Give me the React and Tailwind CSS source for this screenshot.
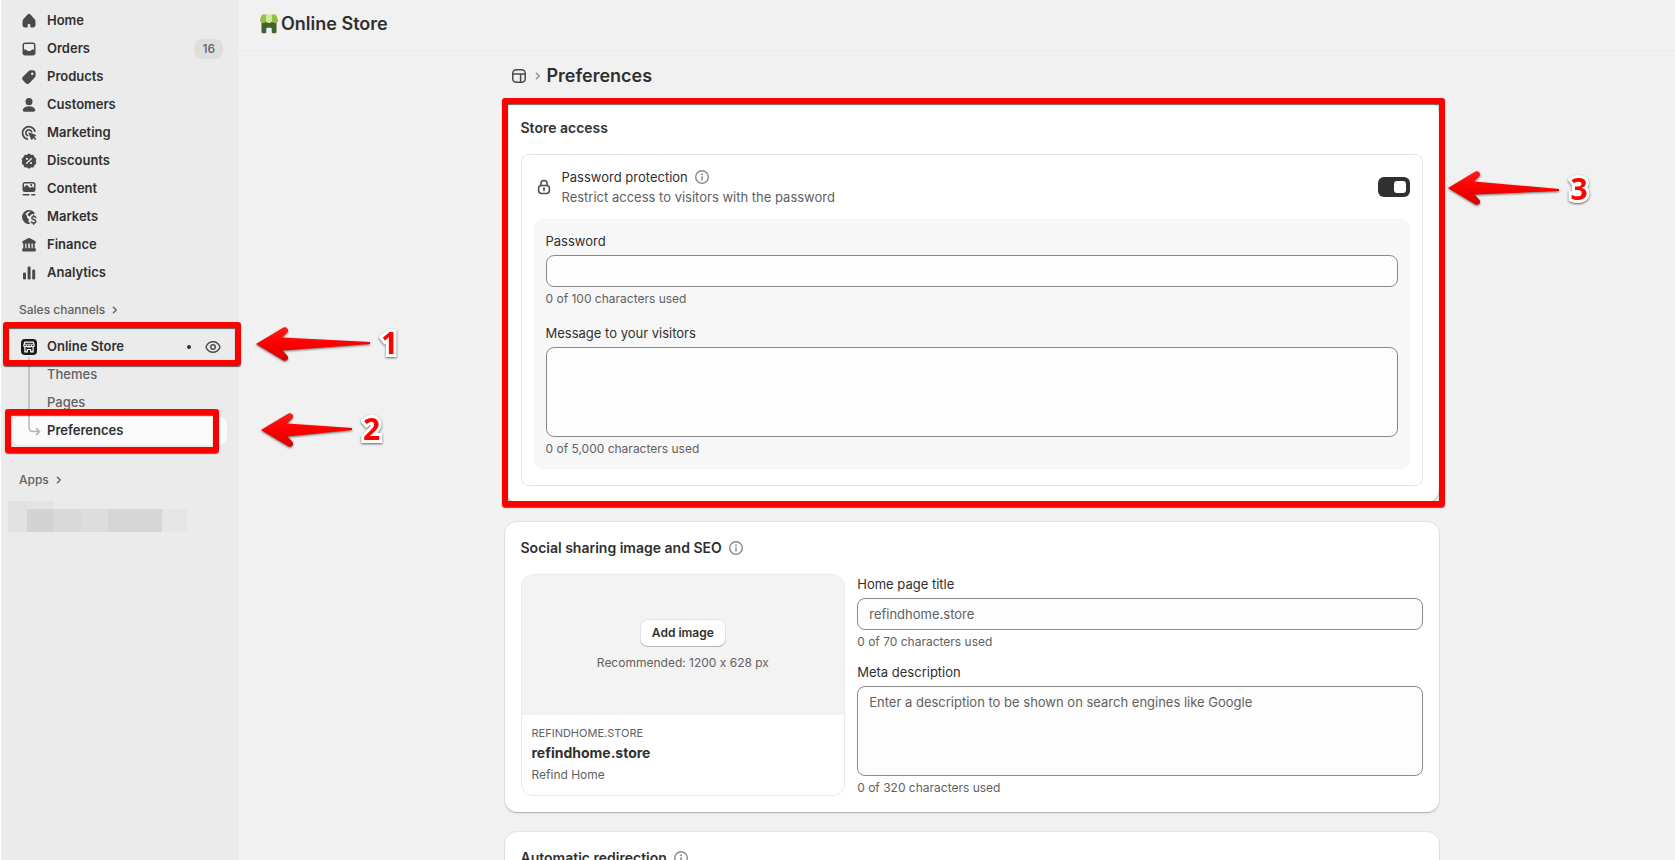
import React from "react";

function Icon({ size = 20, className = "", children }) {
  return (
    <svg
      width={size}
      height={size}
      viewBox="0 0 20 20"
      fill="currentColor"
      fillRule="evenodd"
      aria-hidden="true"
      className={`shrink-0 ${className}`}
    >
      {children}
    </svg>
  );
}

const HomeIcon = () => (
  <Icon>
    <path d="M8.344 3.692a2.25 2.25 0 0 1 3.312 0l3.854 4.19a3.75 3.75 0 0 1 .99 2.538v3.33a2.75 2.75 0 0 1-2.75 2.75h-1.75a.75.75 0 0 1-.75-.75v-2a.75.75 0 0 0-.75-.75h-1a.75.75 0 0 0-.75.75v2a.75.75 0 0 1-.75.75h-1.75a2.75 2.75 0 0 1-2.75-2.75v-3.33c0-.94.353-1.846.99-2.539l3.854-4.189Z" />
  </Icon>
);

const OrdersIcon = () => (
  <Icon>
    <path d="M6.25 3.5a2.75 2.75 0 0 0-2.75 2.75v7.5a2.75 2.75 0 0 0 2.75 2.75h7.5a2.75 2.75 0 0 0 2.75-2.75v-7.5a2.75 2.75 0 0 0-2.75-2.75h-7.5ZM5 6.25c0-.69.56-1.25 1.25-1.25h7.5c.69 0 1.25.56 1.25 1.25v4.25h-1.64c-.5 0-.96.27-1.2.7l-.24.42a.75.75 0 0 1-.65.38h-2.54a.75.75 0 0 1-.65-.38l-.24-.42a1.38 1.38 0 0 0-1.2-.7H5V6.25Z" />
  </Icon>
);

const ProductsIcon = () => (
  <Icon>
    <path d="M9.700 4.100a3 3 0 0 1 2.100-.8h1.950a2.850 2.850 0 0 1 2.850 2.850V8.300c0 .8-.3 1.550-.85 2.100l-5.100 5.500a2.900 2.900 0 0 1-4.100.030l-2.400-2.400a2.900 2.900 0 0 1 .020-4.100L9.700 4.100ZM13.250 8a1.250 1.250 0 1 0 0-2.500 1.250 1.250 0 0 0 0 2.500Z" />
  </Icon>
);

const CustomersIcon = () => (
  <Icon>
    <path d="M6.5 6.4a3.5 3.5 0 0 1 7 0v.35a3.5 3.5 0 0 1-7 0V6.4Z" />
    <path d="M3.9 14.3c.9-1.8 3.3-3 6.1-3s5.200 1.200 6.100 3c.6 1.200-.3 2.400-1.600 2.400H5.500c-1.300 0-2.200-1.200-1.600-2.400Z" />
  </Icon>
);

const MarketingIcon = () => (
  <Icon>
    <g fill="none" stroke="currentColor" strokeWidth="1.7" strokeLinecap="round">
      <path d="M15.900 8.100A6.300 6.300 0 1 0 8.300 16.100" />
      <path d="M12.700 8.800A3 3 0 1 0 8.600 12.600" />
    </g>
    <path d="M9.700 10.700c-.25-.68.4-1.300 1.050-1.050l5.700 2.100c.75.280.73 1.350-.03 1.600l-1.200.4 1.700 1.700a.8.800 0 0 1-1.150 1.150l-1.700-1.700-.45 1.250c-.26.740-1.320.740-1.590 0L9.700 10.700Z" />
  </Icon>
);

const DiscountsIcon = () => (
  <Icon>
    <path d="M8.700 3.200a1.900 1.900 0 0 1 2.600 0l.75.700 1-.15a1.900 1.900 0 0 1 2.150 1.500l.2 1 .9.500a1.900 1.900 0 0 1 .8 2.450l-.4.900.4.950a1.900 1.900 0 0 1-.8 2.450l-.9.500-.2 1a1.900 1.900 0 0 1-2.150 1.500l-1-.15-.75.700a1.900 1.900 0 0 1-2.600 0l-.75-.7-1 .15A1.900 1.900 0 0 1 4.800 15l-.2-1-.9-.500a1.900 1.900 0 0 1-.8-2.450l.4-.950-.4-.900a1.900 1.900 0 0 1 .8-2.450l.9-.500.2-1a1.900 1.900 0 0 1 2.150-1.500l1 .15.750-.700Z" />
    <g stroke="#ebebeb" strokeWidth="1.400" strokeLinecap="round">
      <path d="M7.700 12.300 12.300 7.700" />
    </g>
    <circle cx="7.900" cy="7.900" r="1.050" fill="#ebebeb" />
    <circle cx="12.100" cy="12.100" r="1.050" fill="#ebebeb" />
  </Icon>
);

const ContentIcon = () => (
  <Icon>
    <path d="M6 3a2.500 2.500 0 0 0-2.500 2.500v5A2.500 2.500 0 0 0 6 13h8a2.500 2.500 0 0 0 2.500-2.500v-5A2.500 2.500 0 0 0 14 3H6Zm-1 2.500a1 1 0 0 1 1-1h8a1 1 0 0 1 1 1v3.600l-1.300-1a1.200 1.200 0 0 0-1.500.050l-1 .850-2.600-2.600a1.200 1.200 0 0 0-1.700 0L5 8.300V5.500Zm7.200 1.700a1.100 1.100 0 1 0 0-2.200 1.100 1.100 0 0 0 0 2.200Z" />
    <rect x="3.500" y="15" width="7.200" height="1.600" rx=".8" />
    <rect x="12" y="15" width="4.500" height="1.600" rx=".8" />
  </Icon>
);

const MarketsIcon = () => (
  <Icon>
    <path d="M10 3a7 7 0 1 0 1 13.930l-.300-1.400c-1.300-.100-1.700-1.300-1-2.300l.400-.600-1.400-1.300c-.8-.750-1-1.900-.500-2.700l-1.900-1.100A5.500 5.500 0 0 1 10 4.500c.55 0 1.080.080 1.580.230L9.300 6.600c-.7.600-.6 1.600.1 2.100l1.300.800c.8-1.700 2.300-2.700 4-2.700l1.300-.15A7 7 0 0 0 10 3Z" />
    <path
      d="M16.700 10.400c-.5-.7-1.300-1-2.100-.9-2.400.3-2.300 2.700 0 3 2.700.3 2.900 3.200.3 3.500-1 .1-2-.2-2.500-1M14.600 8.300v1M14.600 16.200v1.100"
      fill="none"
      stroke="currentColor"
      strokeWidth="1.500"
      strokeLinecap="round"
    />
  </Icon>
);

const FinanceIcon = () => (
  <Icon>
    <path d="M9.100 3.200a2 2 0 0 1 1.800 0l4.900 2.500c.7.350 1 .9 1 1.500 0 .8-.6 1.300-1.300 1.300h-11c-.7 0-1.300-.5-1.300-1.300 0-.6.300-1.150 1-1.500l4.900-2.500Z" />
    <path d="M4.300 8h1.900v6H4.300zM7.500 8h1.700v6H7.500zM10.800 8h1.700v6h-1.700zM13.800 8h1.900v6h-1.900z" />
    <rect x="3.200" y="13.300" width="13.600" height="3.200" rx="1" />
  </Icon>
);

const AnalyticsIcon = () => (
  <Icon>
    <rect x="4" y="9.500" width="3" height="7" rx="1.200" />
    <rect x="8.600" y="3.500" width="3" height="13" rx="1.200" />
    <rect x="13.200" y="6.500" width="3" height="10" rx="1.200" />
  </Icon>
);

const StoreBadgeIcon = () => (
  <Icon>
    <rect x="2" y="2" width="16" height="16" rx="4" fill="#1a1a1a" />
    <g fill="none" stroke="#ffffff" strokeWidth="1.200" strokeLinejoin="round">
      <path d="M5.700 5.200h8.600l.9 3.300c0 1.700-2.300 1.800-2.600.2-.3 1.500-2.400 1.500-2.600 0-.2 1.500-2.300 1.500-2.600 0-.3 1.600-2.600 1.500-2.600-.2l.9-3.300Z" />
      <path d="M5.900 10.300v4.600h2.400v-2.400h3.400v2.400h2.400v-4.600" />
      <path d="M5.300 7.300h9.400" strokeWidth=".8" />
    </g>
  </Icon>
);

const EyeIcon = () => (
  <Icon className="text-[#4a4a4a]">
    <g fill="none" stroke="currentColor" strokeWidth="1.400">
      <path d="M3.300 9.100C4.600 6.500 7.100 4.800 10 4.800s5.400 1.700 6.700 4.300c.3.600.3 1.200 0 1.800-1.300 2.600-3.800 4.300-6.700 4.300s-5.400-1.700-6.700-4.300c-.3-.6-.3-1.200 0-1.800Z" />
      <circle cx="10" cy="10" r="2.300" />
    </g>
  </Icon>
);

const ChevronIcon = () => (
  <svg width="6" height="10" viewBox="0 0 6 10" fill="none" stroke="currentColor" strokeWidth="1.400" strokeLinecap="round" strokeLinejoin="round" aria-hidden="true">
    <path d="M1.400 2.200 4.300 5 1.400 7.800" />
  </svg>
);

const InfoIcon = () => (
  <Icon className="text-[#8a8a8a]">
    <circle cx="10" cy="10" r="6.300" fill="none" stroke="currentColor" strokeWidth="1.400" />
    <circle cx="10" cy="7.200" r=".95" />
    <rect x="9.250" y="9" width="1.500" height="4.700" rx=".75" />
  </Icon>
);

const LockIcon = () => (
  <Icon className="text-[#4a4a4a]">
    <g fill="none" stroke="currentColor" strokeWidth="1.500">
      <path d="M6.900 8.700V6.700a3.100 3.100 0 0 1 6.200 0v2" />
      <rect x="4.600" y="8.500" width="10.800" height="7.900" rx="2.800" />
    </g>
    <circle cx="10" cy="11.600" r="1.150" />
    <rect x="9.300" y="12" width="1.400" height="2.400" rx=".6" />
  </Icon>
);

const ThemeIcon = () => (
  <Icon className="text-[#4a4a4a]">
    <g fill="none" stroke="currentColor" strokeWidth="1.500">
      <rect x="3.750" y="3.750" width="12.500" height="12.500" rx="3.500" />
      <path d="M3.750 8h12.500M11.600 8v8.250" />
    </g>
  </Icon>
);

const StoreLogo = () => (
  <svg width="18" height="20" viewBox="0 0 18 20" aria-hidden="true" className="shrink-0">
    <path d="M1.500 7.500h15v10.200a1.500 1.500 0 0 1-1.500 1.500h-2.100a1.200 1.200 0 0 1-1.200-1.200V14.600a.9.900 0 0 0-.9-.9H7.200a.9.900 0 0 0-.9.900V18a1.200 1.200 0 0 1-1.200 1.200H3a1.500 1.500 0 0 1-1.500-1.500V7.500Z" fill="#40652b" />
    <path d="M2.800.6h3.700L6 7c-.1 1.300-1.200 2-2.700 2C1.500 9 0 7.900 0 6.200 0 5.400 1.200 2.300 1.600 1.400 1.800.9 2.200.6 2.800.6Z" fill="#95bf47" />
    <path d="M15.200.6h-3.700L12 7c.1 1.300 1.200 2 2.700 2 1.800 0 3.300-1.100 3.300-2.800 0-.8-1.200-3.900-1.600-4.800-.2-.5-.6-.8-1.200-.8Z" fill="#95bf47" />
    <path d="M6.500.6h5L12 7c0 1.300-1.200 1.900-3 1.900S6 8.300 6 7L6.500.6Z" fill="#cdea96" />
  </svg>
);

function Arrow({ width, tail, className }) {
  const gid = `arrow-${width}`;
  return (
    <svg
      width={width}
      height="36"
      viewBox={`0 0 ${width} 36`}
      aria-hidden="true"
      className={`absolute drop-shadow-[0_1px_1px_rgba(0,0,0,0.55)] ${className}`}
    >
      <defs>
        <linearGradient id={gid} x1="0" y1="0" x2="0" y2="1">
          <stop offset="0" stopColor="#ff1a1a" />
          <stop offset=".45" stopColor="#ff0000" />
          <stop offset="1" stopColor="#d60000" />
        </linearGradient>
      </defs>
      <path
        d={`M0 17 27.500 .5C30.800-.6 33.600 3 31.200 5.600L26 10.500 ${width} ${tail - 1}V${tail + 1}L26.500 23.500 31.200 28.400C33.600 31.400 30.600 34.800 27.500 33.500L0 17Z`}
        fill={`url(#${gid})`}
      />
    </svg>
  );
}

function StepNumber({ className, children }) {
  return (
    <span
      className={`absolute font-['Open_Sans',sans-serif] text-[30px] leading-8 font-bold text-[#f00] [-webkit-text-stroke:6px_white] [paint-order:stroke_fill] drop-shadow-[0_1px_1px_rgba(0,0,0,0.6)] ${className}`}
    >
      {children}
    </span>
  );
}

function Highlight({ className }) {
  return (
    <div
      className={`pointer-events-none absolute z-10 rounded-[3px] border-[6px] border-[#f00] shadow-[0_1px_1px_rgba(0,0,0,0.6),inset_0_1px_1px_rgba(0,0,0,0.6)] ${className}`}
    />
  );
}

const navItems = [
  { label: "Home", icon: HomeIcon },
  { label: "Orders", icon: OrdersIcon, badge: "16" },
  { label: "Products", icon: ProductsIcon },
  { label: "Customers", icon: CustomersIcon },
  { label: "Marketing", icon: MarketingIcon },
  { label: "Discounts", icon: DiscountsIcon },
  { label: "Content", icon: ContentIcon },
  { label: "Markets", icon: MarketsIcon },
  { label: "Finance", icon: FinanceIcon },
  { label: "Analytics", icon: AnalyticsIcon },
];

function NavItem({ label, icon: Glyph, badge }) {
  return (
    <li>
      <a href="#" className="flex h-7 items-center gap-2 rounded-lg pr-[5px] pl-[7px] text-[#4a4a4a]">
        <Glyph />
        <span className="grow text-[#303030]">{label}</span>
        {badge && (
          <span className="rounded-lg bg-[#dedede] px-2 text-xs leading-5 font-medium text-[#616161]">{badge}</span>
        )}
      </a>
    </li>
  );
}

function Sidebar() {
  return (
    <nav aria-label="Main" className="relative z-10 w-[239px] shrink-0 border-l border-white bg-[#ebebeb] px-[11px] pt-[7px] text-[13px] font-semibold">
      <ul>
        {navItems.map((item) => (
          <NavItem key={item.label} {...item} />
        ))}
      </ul>

      <button type="button" className="mt-[9px] flex h-7 items-center gap-[7px] pl-[7px] text-xs font-medium text-[#616161]">
        Sales channels
        <ChevronIcon />
      </button>

      <ul className="relative mt-[9px] text-[#616161]">
        <li className="relative">
          <a href="#" className="flex h-7 items-center gap-2 pr-[5px] pl-[7px] text-[#303030]">
            <StoreBadgeIcon />
            <span className="grow">Online Store</span>
            <span className="mr-1 size-1 rounded-full bg-[#303030]" />
            <EyeIcon />
          </a>
          <Highlight className="-top-[11px] -right-[13px] -bottom-[5px] -left-[9px]" />
          <Arrow width={114} tail={16} className="-top-1.5 left-[244px]" />
          <StepNumber className="-top-1.5 left-[369px]">1</StepNumber>
        </li>
        <li>
          <a href="#" className="flex h-7 items-center pl-[35px] font-medium">Themes</a>
        </li>
        <li>
          <a href="#" className="flex h-7 items-center pl-[35px] font-medium">Pages</a>
        </li>
        <li className="relative">
          <a href="#" aria-current="page" className="mr-px flex h-7 items-center rounded-lg bg-[#fafafa] pl-[35px] text-[#303030]">
            Preferences
          </a>
          <Highlight className="-top-2 right-[9px] -bottom-2 -left-[7px]" />
          <Arrow width={91} tail={16} className="-top-1 left-[249px]" />
          <StepNumber className="-top-1 left-[351px]">2</StepNumber>
        </li>
        <li aria-hidden="true" className="absolute top-6 left-4">
          <svg width="13" height="80" viewBox="0 0 13 80" fill="none" stroke="#b5b5b5" strokeWidth="1.500" strokeLinecap="round" strokeLinejoin="round">
            <path d="M1 0v70c0 3 1.500 4.600 4.500 4.600h6M8.500 71.600l3 3-3 3" />
          </svg>
        </li>
      </ul>

      <button type="button" className="mt-[21px] flex h-7 items-center gap-[7px] pl-[7px] text-xs font-medium text-[#616161]">
        Apps
        <ChevronIcon />
      </button>

      <div className="mt-[7px] -ml-1 flex h-[31px] items-end" aria-hidden="true">
        <div className="h-full w-[19px] bg-[#e1e1e1]" />
        <div className="h-full w-[27px] bg-[#e4e4e4] pt-2">
          <div className="h-full bg-[#d3d3d3]" />
        </div>
        <div className="h-[23px] w-[27px] bg-[#d9d9d9]" />
        <div className="h-[23px] w-[27px] bg-[#dddddd]" />
        <div className="h-[23px] w-[54px] bg-[#d6d6d6]" />
        <div className="h-[23px] w-[25px] bg-[#e6e6e6]" />
      </div>
    </nav>
  );
}

function Field({ id, label, help, multiline, placeholder }) {
  const box =
    "block w-full resize-none rounded-lg border border-[#8a8a8a] bg-[#fdfdfd] px-[11px] py-[5px] text-[13px] leading-5 text-[#303030] placeholder:text-[#616161]";
  return (
    <div>
      <label htmlFor={id} className="mb-1 block leading-5">
        {label}
      </label>
      {multiline ? (
        <textarea id={id} placeholder={placeholder} className={`${box} h-[90px]`} />
      ) : (
        <input id={id} type="text" placeholder={placeholder} className={`${box} h-8`} />
      )}
      <p className="mt-1 text-xs leading-4 text-[#616161]">{help}</p>
    </div>
  );
}

function Card({ children }) {
  return (
    <section className="relative rounded-xl bg-white p-4 shadow-[0_1px_1px_rgba(0,0,0,0.18),0_0_0_1px_rgba(0,0,0,0.05),0_2px_3px_rgba(0,0,0,0.05)]">
      {children}
    </section>
  );
}

function StoreAccess() {
  return (
    <Card>
      <h2 className="text-sm leading-5 font-semibold">Store access</h2>
      <div className="mt-4 rounded-lg border border-[#e3e3e3] px-3 pt-3 pb-4">
        <div className="flex items-center gap-2">
          <LockIcon />
          <div className="grow">
            <div className="flex items-center gap-1">
              <label htmlFor="protection" className="leading-5">Password protection</label>
              <InfoIcon />
            </div>
            <p className="leading-5 text-[#616161]">Restrict access to visitors with the password</p>
          </div>
          <input
            id="protection"
            type="checkbox"
            role="switch"
            defaultChecked
            className="h-5 w-8 appearance-none rounded-md bg-[#cccccc] p-1 before:block before:size-3 before:rounded-[3px] before:bg-white checked:bg-[#303030] checked:before:ml-3"
          />
        </div>
        <div className="mt-3 flex flex-col gap-4 rounded-lg bg-[#f7f7f7] p-3">
          <Field id="password" label="Password" help="0 of 100 characters used" />
          <Field id="message" label="Message to your visitors" help="0 of 5,000 characters used" multiline />
        </div>
      </div>
      <Highlight className="-top-1 -right-1.5 -bottom-[5px] -left-[3px]" />
      <Arrow width={111} tail={19} className="top-[69px] left-full ml-[9px]" />
      <StepNumber className="top-[71px] left-full ml-[132px]">3</StepNumber>
    </Card>
  );
}

function SocialSharing() {
  return (
    <Card>
      <div className="flex items-center gap-1">
        <h2 className="text-sm leading-5 font-semibold">Social sharing image and SEO</h2>
        <InfoIcon />
      </div>
      <div className="mt-4 flex gap-3">
        <div className="w-9/25 overflow-hidden rounded-xl border border-[#ebebeb]">
          <div className="flex h-[140px] flex-col items-center justify-center gap-2 bg-[#f3f3f3]">
            <button type="button" className="h-7 rounded-lg bg-white px-3 text-xs font-semibold shadow-[inset_0_-1px_0_#b5b5b5,inset_0_0_0_1px_#e3e3e3]">
              Add image
            </button>
            <p className="text-xs leading-4 text-[#616161] [font-feature-settings:'calt'_0]">Recommended: 1200 x 628 px</p>
          </div>
          <div className="px-2.5 pt-2.5 pb-3 text-[#616161]">
            <p className="text-[11px] leading-4">REFINDHOME.STORE</p>
            <p className="mt-0.5 text-sm leading-5 font-bold text-[#303030]">refindhome.store</p>
            <p className="mt-1 text-xs leading-4">Refind Home</p>
          </div>
        </div>
        <div className="flex grow flex-col gap-3">
          <Field id="title" label="Home page title" help="0 of 70 characters used" placeholder="refindhome.store" />
          <Field
            id="meta"
            label="Meta description"
            help="0 of 320 characters used"
            placeholder="Enter a description to be shown on search engines like Google"
            multiline
          />
        </div>
      </div>
    </Card>
  );
}

export default function App() {
  return (
    <div className="flex h-screen overflow-hidden bg-[#f1f1f1] font-['Inter',sans-serif] text-[13px] font-normal text-[#303030]">
      <Sidebar />
      <main className="min-w-0 grow">
        <header className="flex items-center gap-[3px] border-b border-[#ebebeb] px-[21px] pt-2.5 pb-3">
          <StoreLogo />
          <h1 className="text-lg leading-7 font-semibold">Online Store</h1>
        </header>
        <div className="pl-[29px]">
          <div className="mx-auto max-w-[934px]">
            <div className="flex items-center px-1 pt-[11px]">
              <a href="#" aria-label="Online Store themes">
                <ThemeIcon />
              </a>
              <span className="mx-1.5 text-[#8a8a8a]">
                <ChevronIcon />
              </span>
              <h2 className="text-lg leading-7 font-semibold">Preferences</h2>
            </div>
            <div className="mt-3 flex flex-col gap-5">
              <StoreAccess />
              <SocialSharing />
              <Card>
                <div className="flex items-center gap-1">
                  <h2 className="text-sm leading-5 font-semibold">Automatic redirection</h2>
                  <InfoIcon />
                </div>
              </Card>
            </div>
          </div>
        </div>
      </main>
    </div>
  );
}
